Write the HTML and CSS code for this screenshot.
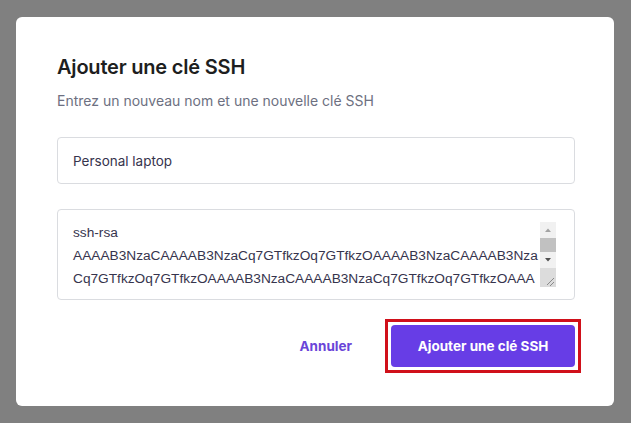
FILE: index.html
```html
<!DOCTYPE html>
<html lang="fr">
<head>
<meta charset="utf-8">
<title>Ajouter une clé SSH</title>
<link rel="stylesheet" href="styles.css">
</head>
<body>
<div class="overlay">
  <div class="modal">
    <h2 class="title">Ajouter une clé SSH</h2>
    <p class="subtitle">Entrez un nouveau nom et une nouvelle clé SSH</p>
    <div class="field">Personal laptop</div>
    <div class="textarea">
      <div class="ta-text">ssh-rsa<br>AAAAB3NzaCAAAAB3NzaCq7GTfkzOq7GTfkzOAAAAB3NzaCAAAAB3Nza<br>Cq7GTfkzOq7GTfkzOAAAAB3NzaCAAAAB3NzaCq7GTfkzOq7GTfkzOAAA</div>
      <div class="scrollbar">
        <div class="sb-btn"><svg width="16" height="16" viewBox="0 0 16 16"><path d="M5 10 L8 6.5 L11 10 Z" fill="#a3a3a3"/></svg></div>
        <div class="sb-thumb"></div>
        <div class="sb-btn"><svg width="16" height="16" viewBox="0 0 16 16"><path d="M5 6 L8 9.5 L11 6 Z" fill="#505050"/></svg></div>
        <div class="sb-corner"><svg width="16" height="19" viewBox="0 0 16 19"><path d="M14 10 L7 17 M14 14 L10 18" stroke="#8a8a8a" stroke-width="1"/></svg></div>
      </div>
    </div>
    <div class="footer">
      <button class="btn-cancel">Annuler</button>
      <span class="highlight"><button class="btn-primary">Ajouter une clé SSH</button></span>
    </div>
  </div>
</div>
</body>
</html>
```
FILE: styles.css
```css
html, body {
  margin: 0;
  padding: 0;
}
body {
  background: #808080;
  width: 631px;
  height: 423px;
  overflow: hidden;
  font-family: Inter, "DejaVu Sans", sans-serif;
}
.overlay {
  padding: 17px 17px 0 16px;
}
.modal {
  box-sizing: border-box;
  width: 598px;
  height: 389px;
  background: #ffffff;
  border-radius: 6px;
  padding: 38px 39px 0 41px;
  display: flex;
  flex-direction: column;
}
.title {
  margin: 0;
  font-size: 20px;
  line-height: 24px;
  font-weight: 600;
  color: #1d1e20;
  letter-spacing: -0.2px;
}
.subtitle {
  margin: 12px 0 0;
  font-size: 14px;
  line-height: 20px;
  color: #6d7081;
}
.field {
  box-sizing: border-box;
  margin-top: 26px;
  height: 47px;
  border: 1px solid #dadce0;
  border-radius: 4px;
  padding: 0 15px;
  display: flex;
  align-items: center;
  font-size: 13.5px;
  color: #36344d;
}
.textarea {
  position: relative;
  box-sizing: border-box;
  margin-top: 25px;
  height: 91px;
  border: 1px solid #dadce0;
  border-radius: 4px;
  padding: 11px 40px 0 15px;
  overflow: hidden;
}
.ta-text {
  font-family: "Liberation Sans", Arial, sans-serif;
  font-size: 13.7px;
  line-height: 23px;
  color: #36344d;
  white-space: nowrap;
}
.scrollbar {
  position: absolute;
  top: 12px;
  right: 18px;
  width: 16px;
  height: 65px;
  background: #f1f1f1;
  display: flex;
  flex-direction: column;
}
.sb-btn {
  height: 16px;
  display: flex;
}
.sb-thumb {
  height: 15px;
  background: #c1c1c1;
}
.sb-corner {
  margin-top: auto;
  height: 19px;
  background: #dcdcdc;
  display: flex;
}
.footer {
  margin-top: 19px;
  display: flex;
  justify-content: flex-end;
  align-items: center;
  gap: 33px;
  margin-right: -6px;
}
.btn-cancel {
  border: none;
  background: none;
  padding: 0;
  font-family: Inter, "DejaVu Sans", sans-serif;
  font-size: 13.5px;
  font-weight: 700;
  color: #6a45d8;
}
.highlight {
  display: flex;
  border: 3px solid #d0101a;
  padding: 3px;
}
.btn-primary {
  width: 184px;
  height: 42px;
  border: none;
  border-radius: 4px;
  background: #673de6;
  color: #ffffff;
  font-family: Inter, "DejaVu Sans", sans-serif;
  font-size: 13.5px;
  font-weight: 700;
}
```
